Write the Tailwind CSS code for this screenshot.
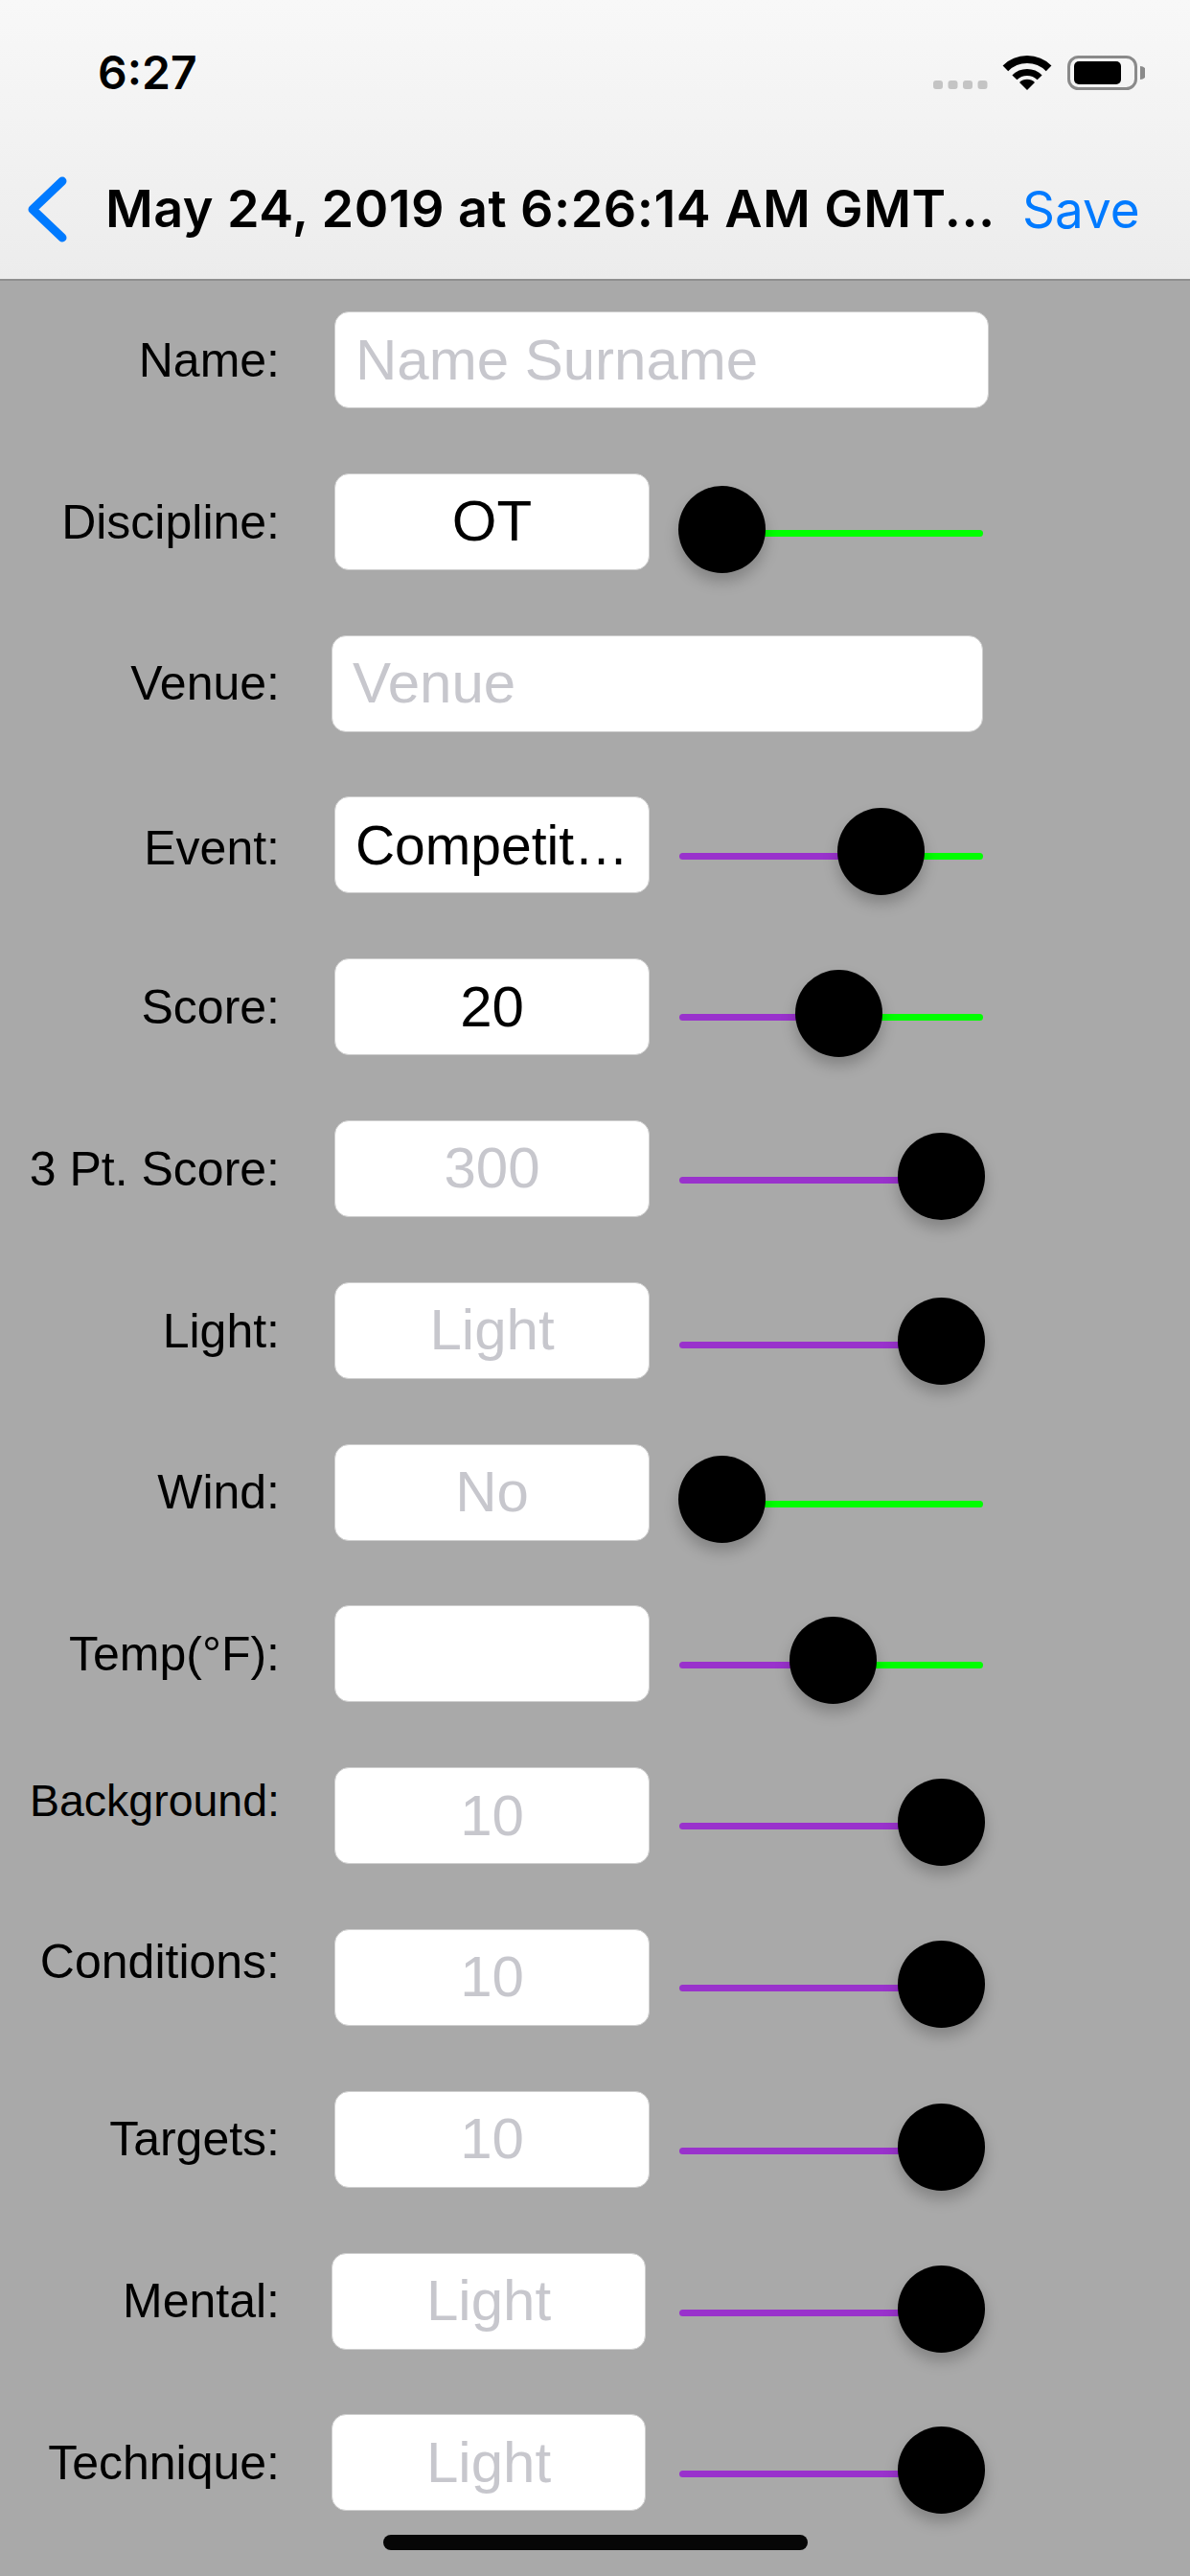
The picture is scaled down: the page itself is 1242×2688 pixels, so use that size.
<!DOCTYPE html>
<html lang="en">
<head>
<meta charset="utf-8">
<title>Edit entry</title>
<script src="https://cdn.jsdelivr.net/npm/@tailwindcss/browser@4"></script>
</head>
<body class="m-0">
<div class="relative w-[1242px] h-[2688px] overflow-hidden bg-[#a9a9a9] font-['Liberation_Sans',sans-serif] text-black">

  <header class="h-[293px] border-b-2 border-[#8f8f8f] bg-gradient-to-b from-[#f8f8f8] to-[#ececec] font-['Inter',sans-serif]">
    <div class="h-[132px] pt-[50px] pl-[102px] pr-[47px] flex items-start">
      <span class="text-[48px] leading-[52px] font-semibold">6:27</span>
      <svg class="ml-auto mt-[8px]" width="221" height="36" viewBox="0 0 221 36">
        <g fill="#c4c4c4">
          <rect x="0" y="26" width="10" height="9" rx="3"/>
          <rect x="15.5" y="26" width="10" height="9" rx="3"/>
          <rect x="31" y="26" width="10" height="9" rx="3"/>
          <rect x="46.5" y="26" width="10" height="9" rx="3"/>
        </g>
        <g transform="translate(73 0)">
          <path d="M2.4 13.4 A32 32 0 0 1 47.6 13.4" fill="none" stroke="#000" stroke-width="8"/>
          <path d="M11.9 22.9 A18.5 18.5 0 0 1 38.1 22.9" fill="none" stroke="#000" stroke-width="7"/>
          <path d="M25 36 L17 28 A11.3 11.3 0 0 1 33 28 Z" fill="#000"/>
        </g>
        <rect x="141.5" y="1.5" width="70" height="33" rx="10" fill="none" stroke="#8a8a8a" stroke-width="3"/>
        <rect x="147" y="6" width="49" height="24" rx="5" fill="#000"/>
        <path d="M216 11 A7 7 0 0 1 216 25 Z" fill="#8a8a8a"/>
      </svg>
    </div>
    <div class="h-[159px] flex items-start">
      <svg class="ml-[26px] mt-[48px] shrink-0" width="48" height="78" viewBox="0 0 48 78">
        <path d="M39 9 L8 38.5 L39 68" fill="none" stroke="#007aff" stroke-width="9" stroke-linecap="round" stroke-linejoin="round"/>
      </svg>
      <span class="ml-[36px] mt-[55px] text-[54px] leading-[62px] font-semibold whitespace-nowrap tracking-[0.45px]">May 24, 2019 at 6:26:14 AM GMT...</span>
      <span class="absolute left-[1067px] top-[188px] text-[53px] leading-[62px] text-[#007aff]">Save</span>
    </div>
  </header>

  <main class="pt-[32px] flex flex-col gap-[67.8px]">

    <div class="flex items-start h-[101px]">
      <label class="w-[292px] h-full flex items-center justify-end text-[50px] leading-[48px]">Name:</label>
      <div class="ml-[57px] w-[683px] h-full rounded-[15px] bg-white border border-[#cfcfcf] flex items-center pl-[21px] text-[60px] leading-[60px] text-[#c7c7cd]">Name Surname</div>
    </div>

    <div class="flex items-start h-[101px]">
      <label class="w-[292px] h-full pt-[2px] flex items-center justify-end text-[50px] leading-[48px]">Discipline:</label>
      <div class="ml-[57px] w-[329px] h-full rounded-[15px] bg-white border border-[#cfcfcf] flex items-center justify-center text-[60px] leading-[60px]">OT</div>
      <div class="relative ml-[31px] mt-[59px] w-[317px] h-[7px] flex">
        <div class="flex-1 rounded-full bg-[#00ff00]"></div>
        <div class="absolute left-[-1px] top-[-46px] w-[91px] h-[91px] rounded-full bg-black shadow-[0_9px_15px_rgba(0,0,0,0.22)]"></div>
      </div>
    </div>

    <div class="flex items-start h-[101px]">
      <label class="w-[292px] h-full flex items-center justify-end text-[50px] leading-[48px]">Venue:</label>
      <div class="ml-[54px] w-[680px] h-full rounded-[15px] bg-white border border-[#cfcfcf] flex items-center pl-[21px] text-[60px] leading-[60px] text-[#c7c7cd]">Venue</div>
    </div>

    <div class="flex items-start h-[101px]">
      <label class="w-[292px] h-full pt-[6px] flex items-center justify-end text-[50px] leading-[48px]">Event:</label>
      <div class="ml-[57px] w-[329px] h-full rounded-[15px] bg-white border border-[#cfcfcf] flex items-center justify-center text-[57px] leading-[60px] whitespace-nowrap">Competit…</div>
      <div class="relative ml-[31px] mt-[59px] w-[317px] h-[7px] flex">
        <div class="w-[210px] rounded-l-full bg-[#9932cc]"></div>
        <div class="flex-1 rounded-r-full bg-[#00ff00]"></div>
        <div class="absolute left-[165px] top-[-47px] w-[91px] h-[91px] rounded-full bg-black shadow-[0_9px_15px_rgba(0,0,0,0.22)]"></div>
      </div>
    </div>

    <div class="flex items-start h-[101px]">
      <label class="w-[292px] h-full flex items-center justify-end text-[50px] leading-[48px]">Score:</label>
      <div class="ml-[57px] w-[329px] h-full rounded-[15px] bg-white border border-[#cfcfcf] flex items-center justify-center text-[60px] leading-[60px]">20</div>
      <div class="relative ml-[31px] mt-[58px] w-[317px] h-[7px] flex">
        <div class="w-[167px] rounded-l-full bg-[#9932cc]"></div>
        <div class="flex-1 rounded-r-full bg-[#00ff00]"></div>
        <div class="absolute left-[121px] top-[-46px] w-[91px] h-[91px] rounded-full bg-black shadow-[0_9px_15px_rgba(0,0,0,0.22)]"></div>
      </div>
    </div>

    <div class="flex items-start h-[101px]">
      <label class="w-[292px] h-full pt-[2px] flex items-center justify-end text-[50px] leading-[48px]">3 Pt. Score:</label>
      <div class="ml-[57px] w-[329px] h-full rounded-[15px] bg-white border border-[#cfcfcf] flex items-center justify-center text-[60px] leading-[60px] text-[#c7c7cd]">300</div>
      <div class="relative ml-[31px] mt-[59px] w-[317px] h-[7px] flex">
        <div class="flex-1 rounded-l-full bg-[#9932cc]"></div>
        <div class="absolute left-[228px] top-[-46px] w-[91px] h-[91px] rounded-full bg-black shadow-[0_9px_15px_rgba(0,0,0,0.22)]"></div>
      </div>
    </div>

    <div class="flex items-start h-[101px]">
      <label class="w-[292px] h-full pt-[2px] flex items-center justify-end text-[50px] leading-[48px]">Light:</label>
      <div class="ml-[57px] w-[329px] h-full rounded-[15px] bg-white border border-[#cfcfcf] flex items-center justify-center text-[60px] leading-[60px] text-[#c7c7cd]">Light</div>
      <div class="relative ml-[31px] mt-[62px] w-[317px] h-[7px] flex">
        <div class="flex-1 rounded-l-full bg-[#9932cc]"></div>
        <div class="absolute left-[228px] top-[-46px] w-[91px] h-[91px] rounded-full bg-black shadow-[0_9px_15px_rgba(0,0,0,0.22)]"></div>
      </div>
    </div>

    <div class="flex items-start h-[101px]">
      <label class="w-[292px] h-full flex items-center justify-end text-[50px] leading-[48px]">Wind:</label>
      <div class="ml-[57px] w-[329px] h-full rounded-[15px] bg-white border border-[#cfcfcf] flex items-center justify-center text-[60px] leading-[60px] text-[#c7c7cd]">No</div>
      <div class="relative ml-[31px] mt-[59px] w-[317px] h-[7px] flex">
        <div class="flex-1 rounded-full bg-[#00ff00]"></div>
        <div class="absolute left-[-1px] top-[-47px] w-[91px] h-[91px] rounded-full bg-black shadow-[0_9px_15px_rgba(0,0,0,0.22)]"></div>
      </div>
    </div>

    <div class="flex items-start h-[101px]">
      <label class="w-[292px] h-full flex items-center justify-end text-[50px] leading-[48px]">Temp(°F):</label>
      <div class="ml-[57px] w-[329px] h-full rounded-[15px] bg-white border border-[#cfcfcf]"></div>
      <div class="relative ml-[31px] mt-[59px] w-[317px] h-[7px] flex">
        <div class="w-[160px] rounded-l-full bg-[#9932cc]"></div>
        <div class="flex-1 rounded-r-full bg-[#00ff00]"></div>
        <div class="absolute left-[115px] top-[-47px] w-[91px] h-[91px] rounded-full bg-black shadow-[0_9px_15px_rgba(0,0,0,0.22)]"></div>
      </div>
    </div>

    <div class="flex items-start h-[101px]">
      <label class="w-[292px] h-full pb-[32px] flex items-center justify-end text-[46.5px] leading-[48px]">Background:</label>
      <div class="ml-[57px] w-[329px] h-full rounded-[15px] bg-white border border-[#cfcfcf] flex items-center justify-center text-[60px] leading-[60px] text-[#c7c7cd]">10</div>
      <div class="relative ml-[31px] mt-[58px] w-[317px] h-[7px] flex">
        <div class="flex-1 rounded-l-full bg-[#9932cc]"></div>
        <div class="absolute left-[228px] top-[-46px] w-[91px] h-[91px] rounded-full bg-black shadow-[0_9px_15px_rgba(0,0,0,0.22)]"></div>
      </div>
    </div>

    <div class="flex items-start h-[101px]">
      <label class="w-[292px] h-full pb-[32px] flex items-center justify-end text-[50px] leading-[48px]">Conditions:</label>
      <div class="ml-[57px] w-[329px] h-full rounded-[15px] bg-white border border-[#cfcfcf] flex items-center justify-center text-[60px] leading-[60px] text-[#c7c7cd]">10</div>
      <div class="relative ml-[31px] mt-[58px] w-[317px] h-[7px] flex">
        <div class="flex-1 rounded-l-full bg-[#9932cc]"></div>
        <div class="absolute left-[228px] top-[-46px] w-[91px] h-[91px] rounded-full bg-black shadow-[0_9px_15px_rgba(0,0,0,0.22)]"></div>
      </div>
    </div>

    <div class="flex items-start h-[101px]">
      <label class="w-[292px] h-full flex items-center justify-end text-[50px] leading-[48px]">Targets:</label>
      <div class="ml-[57px] w-[329px] h-full rounded-[15px] bg-white border border-[#cfcfcf] flex items-center justify-center text-[60px] leading-[60px] text-[#c7c7cd]">10</div>
      <div class="relative ml-[31px] mt-[59px] w-[317px] h-[7px] flex">
        <div class="flex-1 rounded-l-full bg-[#9932cc]"></div>
        <div class="absolute left-[228px] top-[-46px] w-[91px] h-[91px] rounded-full bg-black shadow-[0_9px_15px_rgba(0,0,0,0.22)]"></div>
      </div>
    </div>

    <div class="flex items-start h-[101px]">
      <label class="w-[292px] h-full flex items-center justify-end text-[50px] leading-[48px]">Mental:</label>
      <div class="ml-[54px] w-[328px] h-full rounded-[15px] bg-white border border-[#cfcfcf] flex items-center justify-center text-[60px] leading-[60px] text-[#c7c7cd]">Light</div>
      <div class="relative ml-[35px] mt-[59px] w-[317px] h-[7px] flex">
        <div class="flex-1 rounded-l-full bg-[#9932cc]"></div>
        <div class="absolute left-[228px] top-[-46px] w-[91px] h-[91px] rounded-full bg-black shadow-[0_9px_15px_rgba(0,0,0,0.22)]"></div>
      </div>
    </div>

    <div class="flex items-start h-[101px]">
      <label class="w-[292px] h-full flex items-center justify-end text-[50px] leading-[48px]">Technique:</label>
      <div class="ml-[54px] w-[328px] h-full rounded-[15px] bg-white border border-[#cfcfcf] flex items-center justify-center text-[60px] leading-[60px] text-[#c7c7cd]">Light</div>
      <div class="relative ml-[35px] mt-[59px] w-[317px] h-[7px] flex">
        <div class="flex-1 rounded-l-full bg-[#9932cc]"></div>
        <div class="absolute left-[228px] top-[-46px] w-[91px] h-[91px] rounded-full bg-black shadow-[0_9px_15px_rgba(0,0,0,0.22)]"></div>
      </div>
    </div>

  </main>

  <div class="absolute left-[400px] top-[2645px] w-[443px] h-[16px] rounded-full bg-[#060606]"></div>
</div>
</body>
</html>
